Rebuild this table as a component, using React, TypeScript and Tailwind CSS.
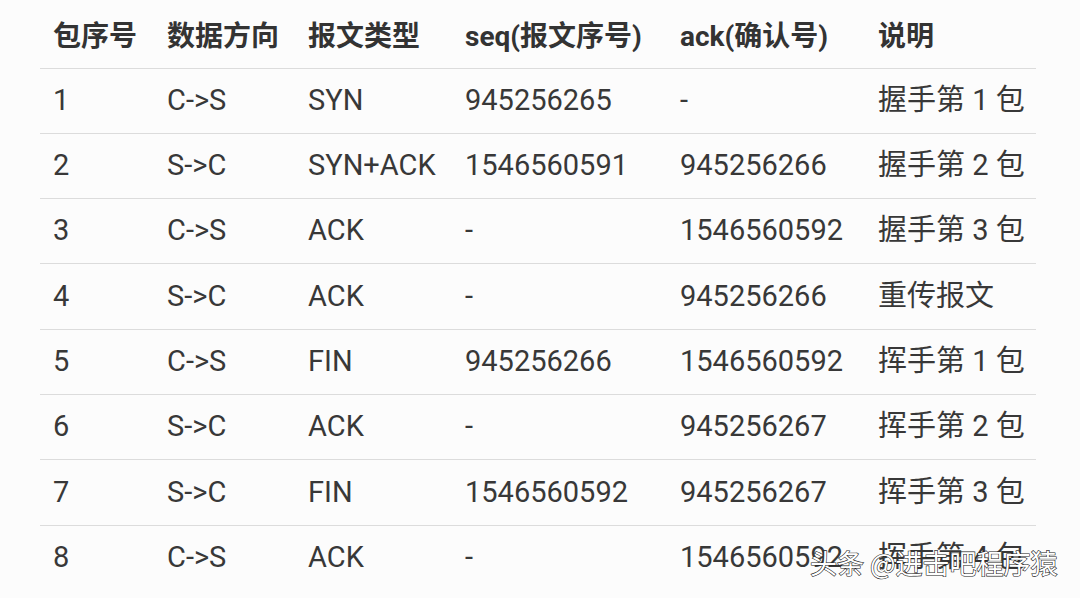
import React from "react";

const rows: string[][] = [
  ["1", "C->S", "SYN", "945256265", "-", "握手第 1 包"],
  ["2", "S->C", "SYN+ACK", "1546560591", "945256266", "握手第 2 包"],
  ["3", "C->S", "ACK", "-", "1546560592", "握手第 3 包"],
  ["4", "S->C", "ACK", "-", "945256266", "重传报文"],
  ["5", "C->S", "FIN", "945256266", "1546560592", "挥手第 1 包"],
  ["6", "S->C", "ACK", "-", "945256267", "挥手第 2 包"],
  ["7", "S->C", "FIN", "1546560592", "945256267", "挥手第 3 包"],
  ["8", "C->S", "ACK", "-", "1546560592", "挥手第 4 包"],
];

const headers = ["包序号", "数据方向", "报文类型", "seq(报文序号)", "ack(确认号)", "说明"];
const widths = ["w-[114px]", "w-[141px]", "w-[157px]", "w-[215px]", "w-[198px]", "w-[171px]"];

export default function App() {
  return (
    <div
      className="relative w-[1080px] h-[598px] overflow-hidden bg-[#fcfcfc] text-[#333333]"
      style={{ fontFamily: 'Roboto, "Noto Sans CJK SC", sans-serif' }}
    >
      <div className="pl-[40px] w-[1076px]">
        <table className="table-fixed border-collapse w-[996px]">
          <colgroup>
            {widths.map((w, i) => (
              <col key={i} className={w} />
            ))}
          </colgroup>
          <thead>
            <tr className="h-[68px]">
              {headers.map((h, i) => (
                <th
                  key={i}
                  className="text-left font-bold text-[28px] pl-[13px] whitespace-nowrap align-middle pt-[6px] text-[#333333]"
                >
                  {h}
                </th>
              ))}
            </tr>
          </thead>
          <tbody>
            {rows.map((r, ri) => (
              <tr key={ri} className="h-[65.3px] border-t border-[#dcdcdc]">
                {r.map((c, ci) => (
                  <td
                    key={ci}
                    className="pl-[13px] text-[29px] whitespace-nowrap align-middle text-[#383838]"
                  >
                    {c}
                  </td>
                ))}
              </tr>
            ))}
          </tbody>
        </table>
      </div>
      <div
        className="absolute left-[810px] top-[543px] text-[27px] text-white font-normal whitespace-nowrap [-webkit-text-stroke:1.2px_#222] [paint-order:stroke_fill]"
        style={{ fontFamily: '"Noto Sans CJK SC", sans-serif' }}
      >
        头条 @进击吧程序猿
      </div>
    </div>
  );
}
